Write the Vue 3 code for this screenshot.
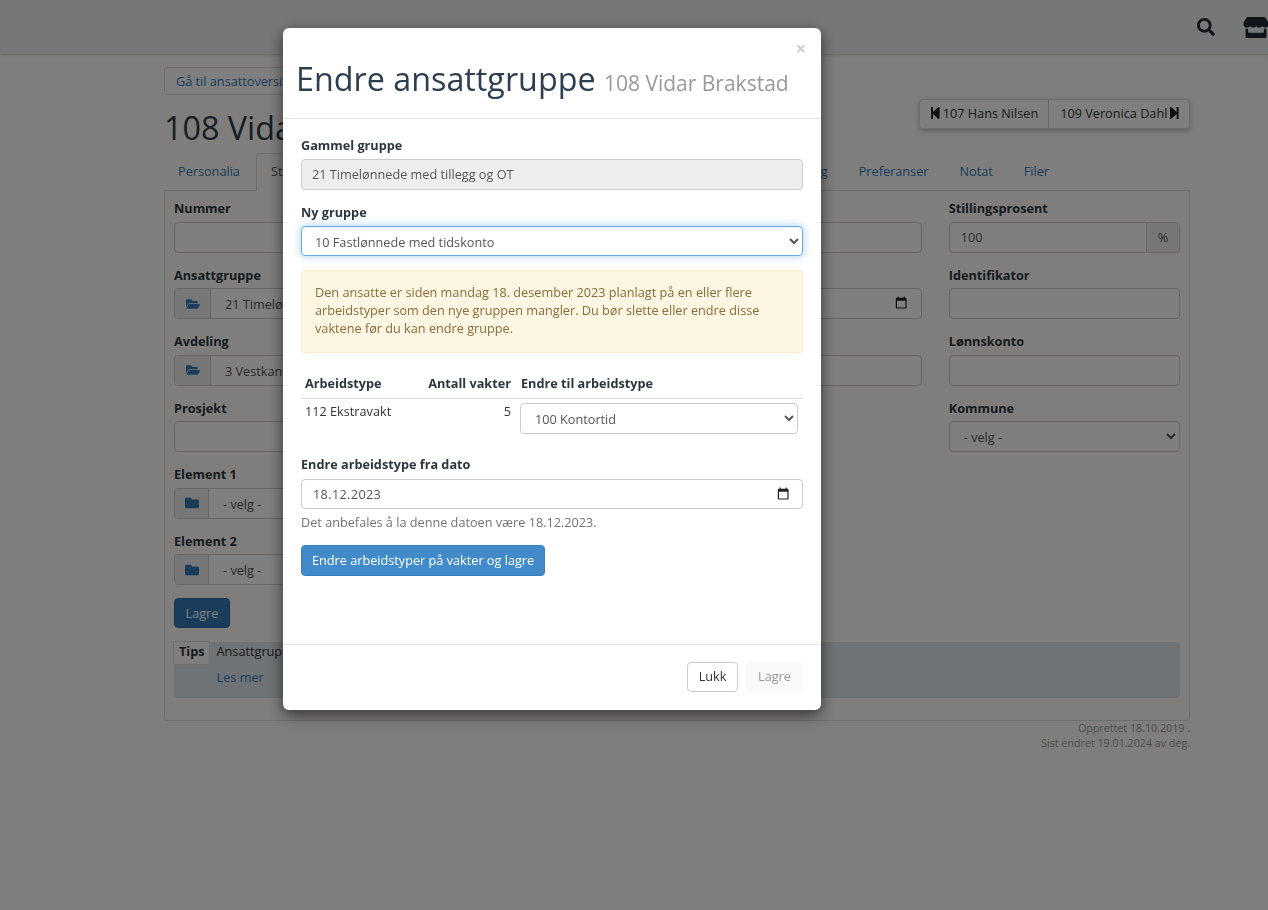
<script setup>
const leftFields = [
  { label: 'Nummer', type: 'input' },
  { label: 'Ansattgruppe', type: 'group', icon: 'open', value: '21 Timelønnede med tillegg og OT' },
  { label: 'Avdeling', type: 'group', icon: 'open', value: '3 Vestkanten' },
  { label: 'Prosjekt', type: 'input' },
  { label: 'Element 1', type: 'group', icon: 'closed', value: '- velg -' },
  { label: 'Element 2', type: 'group', icon: 'closed', value: '- velg -' },
]
const folderOpen = 'M572.694 292.093L500.27 416.248A63.997 63.997 0 0 1 444.989 448H45.025c-18.523 0-30.064-20.093-20.731-36.093l72.424-124.155A64 64 0 0 1 152 256h399.964c18.523 0 30.064 20.093 20.73 36.093zM152 224h328v-48c0-26.51-21.49-48-48-48H272l-64-64H48C21.49 64 0 85.49 0 112v278.046l69.077-118.418C86.214 242.25 117.989 224 152 224z'
const folderClosed = 'M464 128H272l-64-64H48C21.49 64 0 85.49 0 112v288c0 26.51 21.49 48 48 48h416c26.51 0 48-21.49 48-48V176c0-26.51-21.49-48-48-48z'
const calendar = 'M19 3h-1V1h-2v2H8V1H6v2H5c-1.11 0-1.99.9-1.99 2L3 19c0 1.1.89 2 2 2h14c1.1 0 2-.9 2-2V5c0-1.1-.9-2-2-2zm0 16H5V8h14v11z'
</script>

<template>
  <div class="page">
    <header class="navbar">
      <svg class="nav-search" viewBox="0 0 512 512"><path d="M505 442.7L405.3 343c-4.5-4.5-10.6-7-17-7H372c27.6-35.3 44-79.7 44-128C416 93.1 322.9 0 208 0S0 93.1 0 208s93.1 208 208 208c48.3 0 92.7-16.4 128-44v16.3c0 6.4 2.5 12.5 7 17l99.7 99.7c9.4 9.4 24.6 9.4 33.9 0l28.3-28.3c9.4-9.4 9.4-24.6.1-34zM208 336c-70.7 0-128-57.2-128-128 0-70.7 57.2-128 128-128 70.7 0 128 57.2 128 128 0 70.7-57.2 128-128 128z"/></svg>
      <svg class="nav-store" viewBox="0 0 616 512"><path d="M602 118.6L537.1 15C531.3 5.7 521 0 510 0H106C95 0 84.7 5.7 78.9 15L14 118.6c-33.9 54.1-3.9 129.3 59.4 137.9 4.6.6 9.2.9 13.7.9 29.9 0 56.4-13.1 74.8-33.4 18.4 20.3 45 33.4 74.8 33.4 29.9 0 56.4-13.1 74.8-33.4 18.4 20.3 45 33.4 74.8 33.4 29.9 0 56.4-13.1 74.8-33.4 18.5 20.3 45 33.4 74.8 33.4 4.6 0 9.1-.3 13.7-.9 63.5-8.5 93.6-83.7 59.6-137.9zM529.5 288c-10 0-19.9-1.5-29.5-3.8V384H116v-99.8c-9.6 2.2-19.5 3.8-29.5 3.8-6 0-12.1-.4-18-1.2-5.6-.8-11.1-2.1-16.4-3.6V480c0 17.7 14.3 32 32 32h448c17.7 0 32-14.3 32-32V283.2c-5.4 1.6-10.8 2.9-16.4 3.6-6.1.8-12.1 1.2-18.2 1.2z"/></svg>
    </header>

    <main class="content">
      <div class="head">
        <div>
          <a class="back-btn">Gå til ansattoversikt</a>
          <h1 class="title">108 Vidar Brakstad</h1>
        </div>
        <div class="pager">
          <a>
            <svg viewBox="64 32 320 448"><path d="M64 468V44c0-6.6 5.4-12 12-12h48c6.6 0 12 5.4 12 12v176.4l195.5-181C352.1 22.3 384 36.6 384 64v384c0 27.4-31.9 41.7-52.5 24.6L136 292.7V468c0 6.6-5.4 12-12 12H76c-6.6 0-12-5.4-12-12z"/></svg>
            107 Hans Nilsen
          </a>
          <a>
            109 Veronica Dahl
            <svg viewBox="64 32 320 448"><path d="M384 44v424c0 6.6-5.4 12-12 12h-48c-6.6 0-12-5.4-12-12V291.6l-195.5 181C95.9 489.7 64 475.4 64 448V64c0-27.4 31.9-41.7 52.5-24.6L312 219.3V44c0-6.6 5.4-12 12-12h48c6.6 0 12 5.4 12 12z"/></svg>
          </a>
        </div>
      </div>

      <nav class="tabs">
        <a class="tab">Personalia</a>
        <a class="tab active">Stilling</a>
        <span class="tab-gap"></span>
        <a class="tab">Planlegging</a>
        <a class="tab">Preferanser</a>
        <a class="tab">Notat</a>
        <a class="tab">Filer</a>
      </nav>

      <section class="panel">
        <div class="columns">
          <div>
            <div v-for="f in leftFields" :key="f.label" class="field">
              <label>{{ f.label }}</label>
              <div v-if="f.type === 'group'" class="input-group">
                <span class="addon-left" :class="{ narrow: f.icon === 'closed' }">
                  <svg v-if="f.icon === 'open'" class="folder" viewBox="0 0 576 512"><path :d="folderOpen"/></svg>
                  <svg v-else class="folder" viewBox="0 0 512 512"><path :d="folderClosed"/></svg>
                </span>
                <span class="group-value">{{ f.value }}</span>
              </div>
              <div v-else class="box"></div>
            </div>
            <button class="save-btn">Lagre</button>
          </div>
          <div></div>
          <div>
            <div class="field"><label>&nbsp;</label><div class="box"></div></div>
            <div class="field">
              <label>&nbsp;</label>
              <div class="box date-box">
                <svg class="calendar end" viewBox="0 0 24 24"><path :d="calendar"/></svg>
              </div>
            </div>
            <div class="field"><label>&nbsp;</label><div class="box"></div></div>
          </div>
          <div>
            <div class="field">
              <label>Stillingsprosent</label>
              <div class="percent">
                <span class="percent-value">100</span>
                <span class="percent-unit">%</span>
              </div>
            </div>
            <div class="field"><label>Identifikator</label><div class="box"></div></div>
            <div class="field"><label>Lønnskonto</label><div class="box"></div></div>
            <div class="field">
              <label>Kommune</label>
              <select class="select"><option>- velg -</option></select>
            </div>
          </div>
        </div>

        <div class="tips">
          <span class="tips-tag">Tips</span>
          <div class="tips-text">
            <div>Ansattgruppe</div>
            <a>Les mer</a>
          </div>
        </div>
      </section>

      <footer class="meta">
        <div>Opprettet 18.10.2019 .</div>
        <div>Sist endret 19.01.2024 av deg.</div>
      </footer>
    </main>

    <div class="overlay">
      <div class="modal">
        <span class="close">×</span>
        <div class="modal-header">
          <h2>Endre ansattgruppe <small>108 Vidar Brakstad</small></h2>
        </div>
        <div class="modal-body">
          <div class="field">
            <label>Gammel gruppe</label>
            <div class="box readonly">21 Timelønnede med tillegg og OT</div>
          </div>
          <div class="field">
            <label>Ny gruppe</label>
            <select class="select focused"><option>10 Fastlønnede med tidskonto</option></select>
          </div>
          <div class="alert">
            Den ansatte er siden mandag 18. desember 2023 planlagt på en eller flere arbeidstyper som den nye gruppen mangler. Du bør slette eller endre disse vaktene før du kan endre gruppe.
          </div>
          <table class="types">
            <thead>
              <tr>
                <th class="c1">Arbeidstype</th>
                <th class="c2">Antall vakter</th>
                <th class="c3">Endre til arbeidstype</th>
              </tr>
            </thead>
            <tbody>
              <tr>
                <td>112 Ekstravakt</td>
                <td class="c2">5</td>
                <td class="c3"><select class="select"><option>100 Kontortid</option></select></td>
              </tr>
            </tbody>
          </table>
          <div class="date-field">
            <label>Endre arbeidstype fra dato</label>
            <div class="box date-box">
              <span class="date-value">18.12.2023</span>
              <svg class="calendar" viewBox="0 0 24 24"><path :d="calendar"/></svg>
            </div>
            <p class="help">Det anbefales å la denne datoen være 18.12.2023.</p>
          </div>
          <button class="primary">Endre arbeidstyper på vakter og lagre</button>
        </div>
        <div class="modal-footer">
          <button class="close-btn">Lukk</button>
          <button class="disabled-btn">Lagre</button>
        </div>
      </div>
    </div>
  </div>
</template>

<style>
html, body {
  margin: 0;
  background: #fefdfa;
}
</style>

<style scoped>
.page {
  position: relative;
  min-height: 910px;
  overflow: hidden;
  background: #fefdfa;
  color: #333;
  font-family: "Open Sans", sans-serif;
  font-size: 12.7px;
  line-height: 18.57px;
}

.navbar {
  height: 54px;
  background: #eaf0ee;
  box-shadow: 0 1px 3px rgba(0, 0, 0, 0.2);
  display: flex;
  align-items: center;
  justify-content: flex-end;
  gap: 28px;
  margin-right: -1px;
}
.nav-search {
  width: 18px;
  height: 18px;
  margin-top: -1px;
  fill: #222b33;
}
.nav-store {
  width: 26px;
  height: 21px;
  margin-top: 1px;
  fill: #222b33;
}

.content {
  padding: 13px 78px 0 164px;
}
.head {
  display: flex;
  justify-content: space-between;
  align-items: flex-start;
  height: 86px;
}
.back-btn {
  display: inline-block;
  box-sizing: border-box;
  height: 28px;
  padding: 4px 11px;
  border: 1px solid #ddd;
  border-radius: 3px;
  color: #337ab7;
  background: #fff;
}
.title {
  margin: 13px 0 0;
  font-size: 32.3px;
  font-weight: 400;
  line-height: 38px;
  color: #2c3e50;
}
.pager {
  display: flex;
  margin-top: 32px;
  border: 1px solid #d8d8d8;
  border-radius: 4px;
  background: #fff;
  box-shadow: 0 2px 5px rgba(0, 0, 0, 0.25);
}
.pager a {
  display: flex;
  align-items: center;
  gap: 3px;
  box-sizing: border-box;
  height: 28px;
  padding: 0 11px 2px;
  color: #333;
}
.pager a:first-child {
  padding-right: 10px;
  border-right: 1px solid #ccc;
}
.pager a:last-child {
  padding-right: 10px;
}
.pager svg {
  flex: none;
  width: 8.6px;
  height: 12px;
  fill: #222;
}

.tabs {
  display: flex;
  height: 37px;
  margin-left: -1px;
  padding-right: 126px;
}
.tab {
  box-sizing: border-box;
  height: 38px;
  padding: 8px 14px;
  margin-right: 1px;
  color: #337ab7;
  border: 1px solid transparent;
  border-bottom: 0;
}
.tab:last-child {
  margin-right: 0;
}
.tab.active {
  position: relative;
  width: 90px;
  color: #555;
  background: #fefdfa;
  border-color: #ddd;
  border-radius: 4px 4px 0 0;
}
.tab-gap {
  flex: 1;
}

.panel {
  border: 1px solid #ddd;
  border-radius: 0 0 4px 4px;
  padding: 8px 9px 22px;
}
.columns {
  display: grid;
  grid-template-columns: repeat(4, minmax(0, 1fr));
  column-gap: 27px;
}
.field {
  margin-bottom: 13px;
}
label {
  display: block;
  margin-bottom: 4px;
  font-weight: 700;
  color: #2c3640;
}
.box {
  box-sizing: border-box;
  height: 31px;
  padding: 5px 10px;
  border: 1px solid #ccc;
  border-radius: 4px;
  background: #fff;
  color: #555;
}
.date-box {
  display: flex;
  align-items: center;
  justify-content: space-between;
  padding-right: 12px;
}
.date-value {
  margin-left: 1px;
  letter-spacing: 0.35px;
}
.calendar {
  width: 14.4px;
  height: 14.4px;
  fill: #222;
}
.calendar.end {
  margin-left: auto;
}
.input-group {
  display: flex;
  box-sizing: border-box;
  height: 31px;
  border: 1px solid #ccc;
  border-radius: 4px;
  background: #fff;
  overflow: hidden;
}
.addon-left {
  display: flex;
  align-items: center;
  justify-content: center;
  flex: none;
  width: 35px;
  background: #eee;
  border-right: 1px solid #ccc;
}
.addon-left.narrow {
  width: 33px;
}
.folder {
  width: 14px;
  height: 14px;
  fill: #337ab7;
}
.group-value {
  padding: 6px 14px;
  color: #555;
  white-space: nowrap;
}
.percent {
  display: flex;
  box-sizing: border-box;
  height: 31px;
  border: 1px solid #ccc;
  border-radius: 4px;
  background: #fff;
  overflow: hidden;
}
.percent-value {
  flex: 1;
  padding: 5px 11px;
  color: #555;
}
.percent-unit {
  width: 32px;
  padding-top: 5px;
  text-align: center;
  color: #555;
  background: #eee;
  border-left: 1px solid #ccc;
}
.select {
  display: block;
  box-sizing: border-box;
  width: 100%;
  height: 31px;
  padding: 5px 10px;
  border: 1px solid #ccc;
  border-radius: 4px;
  background: #fff;
  color: #555;
  font: inherit;
  outline: none;
}
.select.focused {
  height: 30px;
  margin-top: 5px;
  padding-left: 9px;
  border-color: #66afe9;
  box-shadow: inset 0 1px 1px rgba(0, 0, 0, 0.075), 0 0 8px rgba(102, 175, 233, 0.6);
}
.save-btn {
  display: block;
  height: 30px;
  width: 56px;
  padding: 0 0 1px;
  border: 1px solid #2e6da4;
  border-radius: 4px;
  background: #337ab7;
  color: #fff;
  font: inherit;
}

.tips {
  display: flex;
  margin-top: 14px;
  height: 56px;
  border-radius: 4px;
  background: #dee6ec;
}
.tips-tag {
  box-sizing: border-box;
  height: 24px;
  margin: -1px 0 0 -1px;
  padding: 0 4px 0 5px;
  border: 1px solid #ddd;
  border-radius: 2px;
  background: #fefdfa;
  font-weight: 700;
  color: #2c3640;
}
.tips-text {
  margin: -4px 0 0 7px;
  line-height: 26px;
}
.tips-text a {
  color: #337ab7;
}

.meta {
  text-align: right;
  font-size: 10.7px;
  line-height: 15px;
  color: #999;
}

.overlay {
  position: fixed;
  inset: 0;
  z-index: 10;
  background: rgba(0, 0, 0, 0.5);
}
.modal {
  position: relative;
  box-sizing: border-box;
  display: flex;
  flex-direction: column;
  width: 538px;
  height: 682px;
  margin: 28px 0 0 283px;
  border-radius: 6px;
  background: #fff;
  box-shadow: 0 5px 15px rgba(0, 0, 0, 0.6);
}
.close {
  position: absolute;
  top: 11px;
  right: 15px;
  font-size: 18px;
  font-weight: 700;
  color: #ccc;
}
.modal-header {
  height: 91px;
  box-sizing: border-box;
  padding: 30px 14px 0 13px;
  border-bottom: 1px solid #e5e5e5;
}
.modal-header h2 {
  margin: 0;
  font-size: 32.3px;
  font-weight: 400;
  line-height: 40px;
  color: #2c3e50;
  white-space: nowrap;
}
.modal-header small {
  font-size: 21px;
  color: #999;
}
.modal-body {
  flex: 1;
  padding: 17px 18px 0;
}
.readonly {
  background: #eee;
}
.alert {
  box-sizing: border-box;
  height: 83px;
  margin-top: 14px;
  padding: 12px 13px;
  border: 1px solid #faebcc;
  border-radius: 4px;
  background: #fdf6e3;
  color: #8a6d3b;
  line-height: 18px;
}
.types {
  width: 100%;
  margin-top: 21px;
  border-collapse: collapse;
  table-layout: fixed;
}
.types th {
  padding: 0 4px 5px;
  text-align: left;
  font-weight: 700;
  color: #2c3640;
  border-bottom: 1px solid #ddd;
}
.types td {
  padding: 3px 4px;
  vertical-align: top;
}
.types .c1 {
  width: 112px;
}
.types .c2 {
  width: 86px;
  text-align: right;
  white-space: nowrap;
}
.types th.c3 {
  padding-left: 6px;
}
.types td.c3 {
  padding: 4px 5px;
}
.date-field {
  margin-top: 17px;
}
.date-field label {
  margin-bottom: 6px;
}
.date-field .box {
  height: 30px;
}
.help {
  margin: 4px 0 0;
  color: #737373;
}
.primary {
  display: block;
  height: 31px;
  margin-top: 13px;
  padding: 0 10px;
  border: 1px solid #3a7fbd;
  border-radius: 4px;
  background: #428bca;
  color: #fff;
  font: inherit;
}
.modal-footer {
  display: flex;
  justify-content: flex-end;
  gap: 8px;
  height: 66px;
  box-sizing: border-box;
  padding: 17px 18px 0;
  border-top: 1px solid #e5e5e5;
}
.close-btn,
.disabled-btn {
  box-sizing: border-box;
  height: 30px;
  border-radius: 4px;
  font: inherit;
  padding: 0 0 1px;
}
.close-btn {
  width: 51px;
  border: 1px solid #ccc;
  background: #fff;
  color: #333;
}
.disabled-btn {
  width: 57px;
  border: 1px solid #f9f9f9;
  background: #f9f9f9;
  color: #999;
}
</style>
